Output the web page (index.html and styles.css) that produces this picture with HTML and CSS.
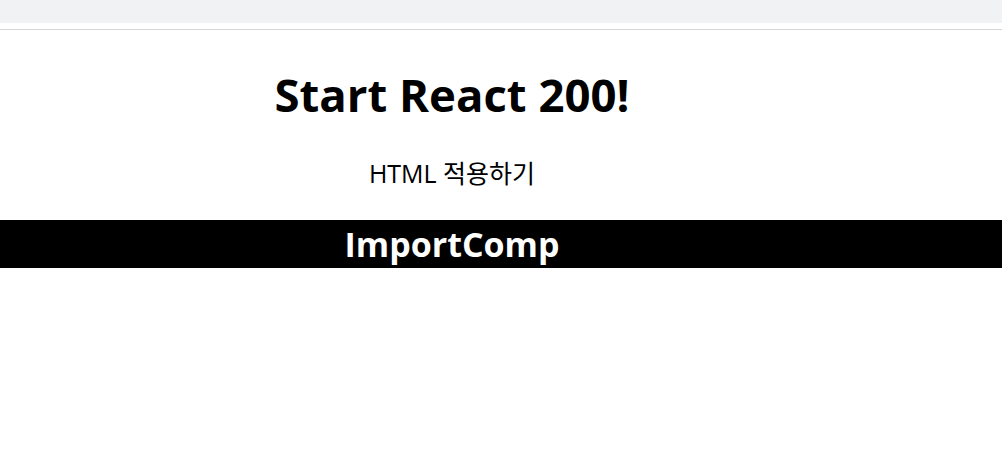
FILE: index.html
```html
<!DOCTYPE html>
<html lang="ko">
<head>
  <meta charset="UTF-8">
  <title>Start React 200!</title>
  <link rel="stylesheet" href="styles.css">
</head>
<body>

  <div class="top-bar"></div>

  <div class="app">
    <h1 class="title">Start React 200!</h1>
    <p class="subtitle">HTML 적용하기</p>
    <h2 class="import-comp">ImportComp</h2>
  </div>

</body>
</html>
```

FILE: styles.css
```css
body {
  margin: 0;
  padding: 0;
  font-family: 'Open Sans', 'Noto Sans CJK KR', sans-serif;
  background: white;
  color: black;
}

.top-bar {
  height: 23px;
  background: #f1f2f4;
  margin-bottom: 6px;
}

.app {
  border-top: 1px solid #d6d6d6;
  text-align: center;
}

.title {
  margin: 32px 0 31px;
  padding-right: 98px;
  font-size: 45.5px;
  line-height: 64px;
  font-weight: bold;
}

.subtitle {
  margin: 0 0 31px;
  padding-right: 98px;
  font-size: 25px;
  line-height: 32px;
}

.import-comp {
  margin: 0;
  padding-right: 98px;
  background: black;
  color: white;
  font-size: 34px;
  line-height: 48px;
  font-weight: bold;
}
```
